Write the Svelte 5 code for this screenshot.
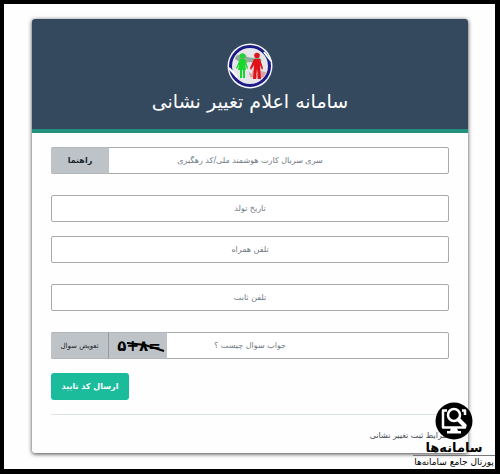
<script>
  let serial = $state('');
  let birth = $state('');
  let mobile = $state('');
  let phone = $state('');
  let answer = $state('');
</script>

<div class="page" dir="rtl" lang="fa">
  <main class="card">
    <header>
      <svg class="emblem" viewBox="0 0 46 46" aria-hidden="true">
        <circle cx="23" cy="23" r="22.500" fill="#f4f5fa" />
        <circle cx="23" cy="23" r="19.500" fill="#e6e5ea" stroke="#1d1c86" stroke-width="3" />
        <path d="M2 25l8 9M37 9l7 9" stroke="#fff" stroke-width="2" />
        <path d="M8 16q1-5 7-4 4-2 5 2l7 1q5-2 8 2l-4 4-7-2-7 1-6-2z" fill="#93ad9b" />
        <path d="M22 29l3 2 1-5 3 7 4-5 6 1-2 5-6 2-8-2z" fill="#dfa0a6" />
        <circle cx="15.500" cy="13" r="2.800" fill="#1ed331" />
        <path d="M13 16h5l3 9-1 1-2-5 1 6h-1v8h-2v-8h-1v8h-2v-8h-2l1-6-2 5-1-1z" fill="#17d62c" />
        <circle cx="30" cy="12.500" r="2.800" fill="#d9161b" />
        <path d="M27 16h6l3 9-1 2-2-5 1 14h-3l-1-10-1 10h-3l1-14-3 5-1-2z" fill="#df1419" />
      </svg>
      <h1>سامانه اعلام تغییر نشانی</h1>
    </header>

    <form onsubmit={(e) => e.preventDefault()}>
      <div class="field wide">
        <input type="text" aria-label="سری سریال کارت هوشمند ملی/کد رهگیری" placeholder="سری سریال کارت هوشمند ملی/کد رهگیری" bind:value={serial} />
        <div class="addons">
          <button type="button" class="addon help">راهنما</button>
        </div>
      </div>
      <div class="field">
        <input type="text" aria-label="تاریخ تولد" placeholder="تاریخ تولد" bind:value={birth} />
      </div>
      <div class="field wide">
        <input type="tel" aria-label="تلفن همراه" placeholder="تلفن همراه" bind:value={mobile} />
      </div>
      <div class="field wide">
        <input type="tel" aria-label="تلفن ثابت" placeholder="تلفن ثابت" bind:value={phone} />
      </div>
      <div class="field">
        <input type="text" aria-label="جواب سوال چیست ؟" placeholder="جواب سوال چیست ؟" bind:value={answer} />
        <div class="addons">
          <div class="addon captcha">
            <svg viewBox="0 0 58 25" direction="ltr">
              <text x="30" y="18" text-anchor="middle">&#x202D;۵+۸=&#x202C;</text>
              <path d="M18 10l18 2 19 6" />
            </svg>
          </div>
          <button type="button" class="addon change">تعویض سوال</button>
        </div>
      </div>
      <button type="submit" class="send">ارسال کد تایید</button>
    </form>

    <footer><a href="#terms">شرایط ثبت تغییر نشانی</a></footer>
  </main>

  <div class="brand">
    <svg viewBox="0 0 38 38" aria-hidden="true">
      <circle cx="19" cy="19" r="18.500" fill="#000" />
      <g fill="none" stroke="#fff" stroke-width="2.500" stroke-linejoin="round">
        <path d="M12 8.500H8V25.500H30V22M27 8.500h3V13" />
        <circle cx="19" cy="13" r="6" />
        <path d="M23.500 17.500l6 6" stroke-width="4" stroke-linecap="round" />
      </g>
      <path d="M16 26h6l1 3h3v2.500H12V29h3z" fill="#fff" />
    </svg>
    <strong>سامانه‌ها</strong>
    <span>پورتال جامع سامانه‌ها</span>
  </div>
</div>

<style>
  :global(body) {
    margin: 0;
  }
  .page {
    position: relative;
    box-sizing: border-box;
    min-height: 100vh;
    padding: 15px 27px 15px 28px;
    border: solid #000;
    border-width: 4px 5px 5px 4px;
    background: #fefefe;
    font-family: "DejaVu Sans", sans-serif;
  }
  .card {
    border-radius: 3px;
    overflow: hidden;
    background: #fefefe;
    box-shadow: 0 1px 4px rgba(0, 0, 0, 0.75);
  }
  header {
    display: flex;
    flex-direction: column;
    align-items: center;
    box-sizing: border-box;
    height: 114px;
    padding-top: 24px;
    border-bottom: 4px solid #23917e;
    background: #34495e;
    color: #fff;
  }
  .emblem {
    width: 46px;
    height: 46px;
  }
  h1 {
    margin: 0;
    font-size: 19px;
    font-weight: 400;
    line-height: 24px;
    white-space: nowrap;
  }
  form {
    display: flex;
    flex-direction: column;
    align-items: flex-end;
    padding: 14px 19px;
  }
  .field {
    display: grid;
    width: 100%;
    margin-bottom: 14px;
  }
  .wide {
    margin-bottom: 21px;
  }
  .field > * {
    grid-area: 1 / 1;
  }
  input {
    box-sizing: border-box;
    width: 100%;
    height: 27px;
    padding: 0 8px;
    border: 1px solid #a6abad;
    border-radius: 2px;
    background: #fff;
    color: #34495e;
    font: 8px/25px "DejaVu Sans", sans-serif;
    text-align: center;
    direction: rtl;
  }
  input::placeholder {
    color: #6f7983;
    opacity: 1;
  }
  .addons {
    display: flex;
    justify-self: end;
    height: 27px;
  }
  .addon {
    box-sizing: border-box;
    width: 58px;
    padding: 0;
    border: 1px solid #b1b7bb;
    border-width: 1px 0;
    background: #bdc3c7;
    color: #1c2530;
    font-family: "DejaVu Sans", sans-serif;
    white-space: nowrap;
  }
  .help {
    border-radius: 2px 0 0 2px;
    font-size: 8px;
    font-weight: 700;
  }
  .change {
    border-right: 1px solid #959b9f;
    border-radius: 2px 0 0 2px;
    font-size: 7px;
  }
  .captcha svg {
    display: block;
    width: 58px;
    height: 25px;
  }
  .captcha text {
    font: 700 15px "DejaVu Sans", sans-serif;
    fill: #000;
  }
  .captcha path {
    fill: none;
    stroke: #000;
    stroke-width: 2;
  }
  .send {
    width: 78px;
    height: 27px;
    padding: 0;
    border: 0;
    border-radius: 3px;
    background: #1abc9c;
    color: #fff;
    font: 700 8px "DejaVu Sans", sans-serif;
    white-space: nowrap;
  }
  footer {
    margin: 0 19px;
    padding: 12px 0 9px;
    border-top: 1px solid #dce3e3;
    font-size: 8px;
    line-height: 17px;
  }
  footer a {
    color: #3f4851;
    text-decoration: none;
  }
  .brand {
    position: absolute;
    right: 0;
    bottom: 0;
    display: flex;
    flex-direction: column;
    align-items: center;
    width: 82px;
    color: #000;
    white-space: nowrap;
  }
  .brand svg {
    width: 38px;
    height: 38px;
  }
  .brand strong {
    font-size: 13px;
    line-height: 15px;
  }
  .brand span {
    align-self: stretch;
    border-top: 1px solid #777;
    font-size: 9px;
    line-height: 13px;
    text-align: center;
  }
</style>
